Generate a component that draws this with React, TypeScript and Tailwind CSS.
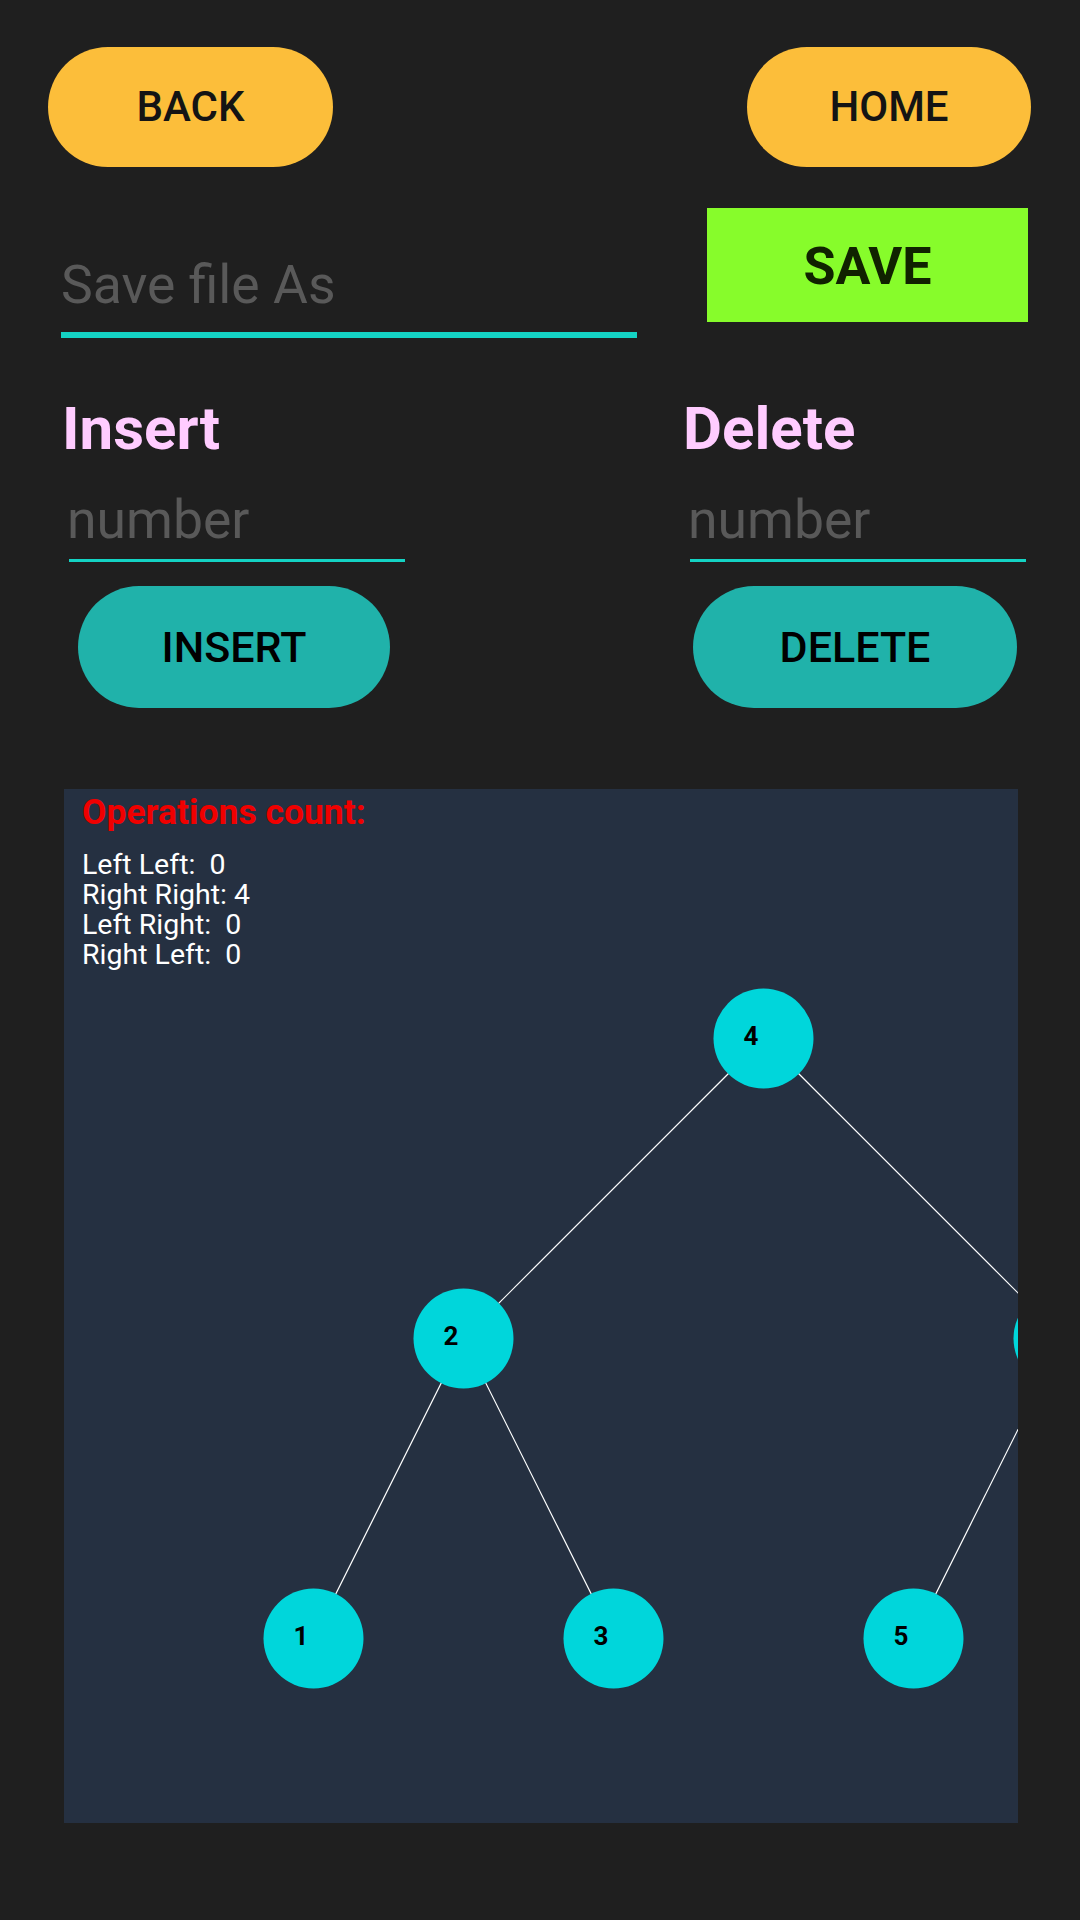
import React from "react";

type Node = { v: number; x: number; y: number; label: boolean };

const nodes: Node[] = [
  { v: 4, x: 699.5, y: 249.5, label: true },
  { v: 2, x: 399.5, y: 549.5, label: true },
  { v: 6, x: 999.5, y: 549.5, label: false },
  { v: 1, x: 249.5, y: 849.5, label: true },
  { v: 3, x: 549.5, y: 849.5, label: true },
  { v: 5, x: 849.5, y: 849.5, label: true },
  { v: 7, x: 1149.5, y: 849.5, label: false },
];

const edges: [number, number][] = [
  [0, 1],
  [0, 2],
  [1, 3],
  [1, 4],
  [2, 5],
  [2, 6],
];

function Tree() {
  return (
    <svg
      className="absolute left-0 top-0"
      width={954}
      height={1034}
      viewBox="0 0 954 1034"
    >
      {edges.map(([a, b], i) => (
        <line
          key={i}
          x1={nodes[a].x}
          y1={nodes[a].y}
          x2={nodes[b].x}
          y2={nodes[b].y}
          stroke="#ffffff"
          strokeWidth={1.2}
        />
      ))}
      {nodes.map((n) => (
        <g key={n.v}>
          <circle cx={n.x} cy={n.y} r={50} fill="#00d6db" />
          {n.label && (
            <text
              x={n.x - 20}
              y={n.y + 6}
              fontFamily="Roboto, sans-serif"
              fontWeight={700}
              fontSize={26}
              fill="#000000"
            >
              {n.v}
            </text>
          )}
        </g>
      ))}
    </svg>
  );
}

export default function App() {
  return (
    <div className="w-[1080px] h-[1920px] bg-[#1f1f1f] font-['Roboto',sans-serif] overflow-hidden">
      <div className="flex justify-between pl-[48px] pr-[49px] pt-[47px]">
        <button className="w-[285px] h-[120px] rounded-full bg-[#fcbe3a] text-[42px] leading-none font-medium text-[#141414]">
          BACK
        </button>
        <button className="w-[284px] h-[120px] rounded-full bg-[#fcbe3a] text-[42px] leading-none font-medium text-[#141414]">
          HOME
        </button>
      </div>

      <div className="flex mt-[41px]">
        <div className="ml-[61px] w-[576px] pt-[47px]">
          <div className="h-[60px] leading-[60px] text-[53.5px] text-[#595959] whitespace-nowrap">
            Save file As
          </div>
          <div className="mt-[17px] h-[6px] bg-[#14d3c4]" />
        </div>
        <div className="ml-[70px] w-[321px] h-[114px] bg-[#87fc2b] flex items-center justify-center pt-[4px] text-[52px] leading-none font-bold text-[#102200]">
          SAVE
        </div>
      </div>

      <div className="flex mt-[56px]">
        <div className="ml-[62px] w-[400px] flex flex-col items-start">
          <div className="h-[70px] leading-[70px] text-[60px] font-bold text-[#ffccff]">
            Insert
          </div>
          <div className="mt-[26px] pl-[5px] h-[60px] leading-[60px] text-[53.5px] text-[#595959]">
            number
          </div>
          <div className="mt-[9px] ml-[7px] w-[336px] h-[3px] bg-[#14d3c4]" />
          <button className="mt-[24px] ml-[16px] w-[312px] h-[122px] rounded-full bg-[#20b2aa] text-[43px] leading-none font-medium text-black">
            INSERT
          </button>
        </div>
        <div className="ml-[221px] w-[360px] flex flex-col items-start">
          <div className="h-[70px] leading-[70px] text-[60px] font-bold text-[#ffccff]">
            Delete
          </div>
          <div className="mt-[26px] pl-[5px] h-[60px] leading-[60px] text-[53.5px] text-[#595959]">
            number
          </div>
          <div className="mt-[9px] ml-[7px] w-[336px] h-[3px] bg-[#14d3c4]" />
          <button className="mt-[24px] ml-[10px] w-[324px] h-[122px] rounded-full bg-[#20b2aa] text-[43px] leading-none font-medium text-black">
            DELETE
          </button>
        </div>
      </div>

      <div className="relative mt-[81px] ml-[64px] w-[954px] h-[1034px] bg-[#253041] overflow-hidden">
        <Tree />
        <div className="relative pl-[18px] pt-[3px]">
          <div className="h-[40px] leading-[40px] text-[35.5px] font-bold text-[#f00000]">
            Operations count:
          </div>
          <div className="mt-[18px] text-[28.5px] leading-[30px] text-white whitespace-pre">
            <div>{"Left Left:  0"}</div>
            <div>{"Right Right: 4"}</div>
            <div>{"Left Right:  0"}</div>
            <div>{"Right Left:  0"}</div>
          </div>
        </div>
      </div>
    </div>
  );
}
